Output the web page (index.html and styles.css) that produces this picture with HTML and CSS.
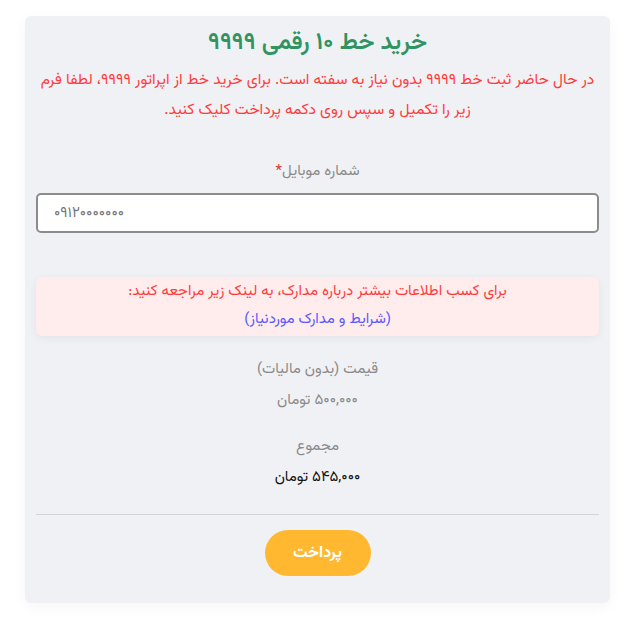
FILE: index.html
```html
<!DOCTYPE html>
<html lang="fa" dir="rtl">
<head>
  <meta charset="UTF-8" />
  <title>خرید خط ۱۰ رقمی ۹۹۹۹</title>
  <meta name="viewport" content="width=device-width, initial-scale=1" />
  <link rel="stylesheet" href="styles.css">
</head>
<body>
  <div class="card">
    <h1 class="title">خرید خط ۱۰ رقمی ۹۹۹۹</h1>
    <p class="notice">در حال حاضر ثبت خط ۹۹۹۹ بدون نیاز به سفته است. برای خرید خط از اپراتور ۹۹۹۹، لطفا فرم زیر را تکمیل و سپس روی دکمه پرداخت کلیک کنید.</p>

    <label class="field-label" for="mobile">شماره موبایل<span class="req">*</span></label>
    <input class="field" type="text" id="mobile" dir="ltr" placeholder="۰۹۱۲۰۰۰۰۰۰۰" />

    <div class="docs">
      <div>برای کسب اطلاعات بیشتر درباره مدارک، به لینک زیر مراجعه کنید:</div>
      <a href="#">(شرایط و مدارک موردنیاز)</a>
    </div>

    <div class="price">
      <div class="price-label">قیمت (بدون مالیات)</div>
      <div class="price-value">۵۰۰,۰۰۰ تومان</div>
    </div>

    <div class="price">
      <div class="price-label">مجموع</div>
      <div class="price-value total">۵۴۵,۰۰۰ تومان</div>
    </div>

    <hr class="sep" />

    <div class="actions">
      <button class="pay">پرداخت</button>
    </div>
  </div>
</body>
</html>
```

FILE: styles.css
```css
:root {
  --green: #2f9461;
  --red: #ff3c3c;
  --card: #f0f1f5;
  --gray: #8a8a8a;
  --yellow: #ffb830;
}

* {
  box-sizing: border-box;
  margin: 0;
  padding: 0;
}

body {
  font-family: "Vazirmatn", "Vazir", "Noto Sans Arabic", "DejaVu Sans", sans-serif;
  background: #ffffff;
  padding: 16px 14px 16px 25px;
}

.card {
  background: var(--card);
  border-radius: 6px;
  box-shadow: 0 4px 14px rgba(0,0,0,0.04);
  padding: 12px 11px 27px;
  text-align: center;
}

.title {
  color: var(--green);
  font-size: 24px;
  font-weight: 600;
  line-height: 30px;
}

.notice {
  color: var(--red);
  font-size: 15.5px;
  line-height: 30px;
  margin-top: 7px;
}

.field-label {
  display: block;
  color: var(--gray);
  font-size: 15px;
  margin-top: 37px;
  line-height: 20px;
}

.req {
  color: #d93636;
}

.field {
  display: block;
  width: 100%;
  height: 40px;
  margin-top: 11px;
  border: 2px solid #8c8c8c;
  border-radius: 5px;
  background: #fff;
  padding: 0 16px;
  font-family: inherit;
  font-size: 15px;
}

.field::placeholder {
  color: #777;
}

.docs {
  margin-top: 44px;
  background: #ffecec;
  border-radius: 6px;
  box-shadow: 0 2px 8px rgba(0,0,0,0.06);
  padding: 1px 10px 2px;
  color: var(--red);
  font-size: 15px;
  line-height: 28px;
}

.docs a {
  color: #5a5aff;
  text-decoration: none;
}

.price {
  margin-top: 19px;
  font-size: 15px;
  line-height: 30px;
  color: var(--gray);
}

.price + .price {
  margin-top: 16px;
}

.price-value {
  margin-top: 1px;
}

.total {
  color: #111;
}

.sep {
  border: none;
  border-top: 1px solid #d3d3d3;
  margin-top: 21px;
}

.actions {
  margin-top: 15px;
}

.pay {
  background: var(--yellow);
  color: #fff;
  border: none;
  border-radius: 24px;
  width: 106px;
  height: 46px;
  font-family: inherit;
  font-size: 16px;
  font-weight: bold;
  cursor: pointer;
}
```
